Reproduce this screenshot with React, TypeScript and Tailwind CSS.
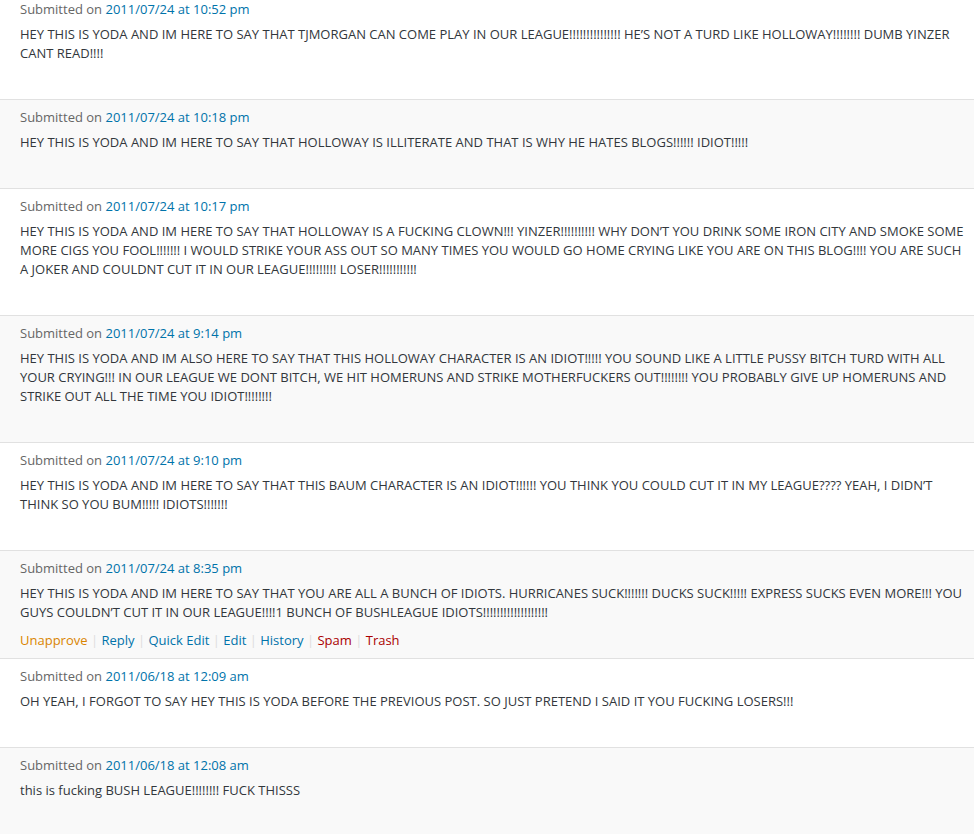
import React from "react";

type Row = { date: string; lines: string[]; actions?: boolean };

const rows: Row[] = [
  {
    date: "2011/07/24 at 10:52 pm",
    lines: [
      "HEY THIS IS YODA AND IM HERE TO SAY THAT TJMORGAN CAN COME PLAY IN OUR LEAGUE!!!!!!!!!!!!!!! HE\u2019S NOT A TURD LIKE HOLLOWAY!!!!!!!! DUMB YINZER",
      "CANT READ!!!!",
    ],
  },
  {
    date: "2011/07/24 at 10:18 pm",
    lines: ["HEY THIS IS YODA AND IM HERE TO SAY THAT HOLLOWAY IS ILLITERATE AND THAT IS WHY HE HATES BLOGS!!!!!! IDIOT!!!!!"],
  },
  {
    date: "2011/07/24 at 10:17 pm",
    lines: [
      "HEY THIS IS YODA AND IM HERE TO SAY THAT HOLLOWAY IS A FUCKING CLOWN!!! YINZER!!!!!!!!!! WHY DON\u2019T YOU DRINK SOME IRON CITY AND SMOKE SOME",
      "MORE CIGS YOU FOOL!!!!!!! I WOULD STRIKE YOUR ASS OUT SO MANY TIMES YOU WOULD GO HOME CRYING LIKE YOU ARE ON THIS BLOG!!!! YOU ARE SUCH",
      "A JOKER AND COULDNT CUT IT IN OUR LEAGUE!!!!!!!!! LOSER!!!!!!!!!!!",
    ],
  },
  {
    date: "2011/07/24 at 9:14 pm",
    lines: [
      "HEY THIS IS YODA AND IM ALSO HERE TO SAY THAT THIS HOLLOWAY CHARACTER IS AN IDIOT!!!!! YOU SOUND LIKE A LITTLE PUSSY BITCH TURD WITH ALL",
      "YOUR CRYING!!! IN OUR LEAGUE WE DONT BITCH, WE HIT HOMERUNS AND STRIKE MOTHERFUCKERS OUT!!!!!!!! YOU PROBABLY GIVE UP HOMERUNS AND",
      "STRIKE OUT ALL THE TIME YOU IDIOT!!!!!!!!",
    ],
  },
  {
    date: "2011/07/24 at 9:10 pm",
    lines: [
      "HEY THIS IS YODA AND IM HERE TO SAY THAT THIS BAUM CHARACTER IS AN IDIOT!!!!!! YOU THINK YOU COULD CUT IT IN MY LEAGUE???? YEAH, I DIDN\u2019T",
      "THINK SO YOU BUM!!!!! IDIOTS!!!!!!!",
    ],
  },
  {
    date: "2011/07/24 at 8:35 pm",
    lines: [
      "HEY THIS IS YODA AND IM HERE TO SAY THAT YOU ARE ALL A BUNCH OF IDIOTS. HURRICANES SUCK!!!!!!! DUCKS SUCK!!!!! EXPRESS SUCKS EVEN MORE!!! YOU",
      "GUYS COULDN\u2019T CUT IT IN OUR LEAGUE!!!!1 BUNCH OF BUSHLEAGUE IDIOTS!!!!!!!!!!!!!!!!!!!",
    ],
    actions: true,
  },
  {
    date: "2011/06/18 at 12:09 am",
    lines: ["OH YEAH, I FORGOT TO SAY HEY THIS IS YODA BEFORE THE PREVIOUS POST. SO JUST PRETEND I SAID IT YOU FUCKING LOSERS!!!"],
  },
  {
    date: "2011/06/18 at 12:08 am",
    lines: ["this is fucking BUSH LEAGUE!!!!!!!! FUCK THISSS"],
  },
];

const Sep = () => <span className="text-[#dddddd]"> | </span>;

function Actions({ visible }: { visible: boolean }) {
  return (
    <div className={`mt-[9px] h-[19px] leading-[19px] whitespace-nowrap ${visible ? "" : "invisible"}`}>
      <a className="text-[#d98500]">Unapprove</a>
      <Sep />
      <a className="text-[#0073aa]">Reply</a>
      <Sep />
      <a className="text-[#0073aa]">Quick Edit</a>
      <Sep />
      <a className="text-[#0073aa]">Edit</a>
      <Sep />
      <a className="text-[#0073aa]">History</a>
      <Sep />
      <a className="text-[#aa0000]">Spam</a>
      <Sep />
      <a className="text-[#aa0000]">Trash</a>
    </div>
  );
}

export default function App() {
  return (
    <div className="min-h-screen bg-white overflow-hidden font-['Open_Sans',sans-serif] text-[13px]">
      <div className="-mt-2">
        {rows.map((r, i) => (
          <div
            key={i}
            className={`border-b border-[#e1e1e1] px-5 pt-2 pb-2 ${i % 2 === 1 ? "bg-[#f9f9f9]" : "bg-white"}`}
          >
            <div className="leading-[19px] text-[#666666]">
              Submitted on <a className="text-[#0073aa]">{r.date}</a>
            </div>
            <div className="mt-[6px] leading-[19px] text-[#32373c]">
              {r.lines.map((l, j) => (
                <div key={j} className="whitespace-nowrap">
                  {l}
                </div>
              ))}
            </div>
            <Actions visible={!!r.actions} />
          </div>
        ))}
      </div>
    </div>
  );
}
